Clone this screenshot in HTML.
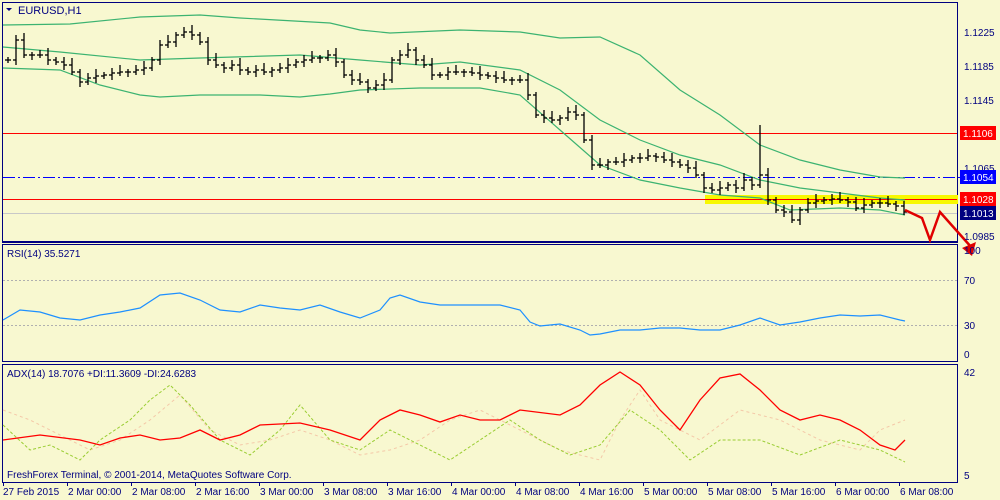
<!DOCTYPE html>
<html><head><meta charset="utf-8"><style>
html,body{margin:0;padding:0;background:#f8f8d0;}
svg{display:block;font-family:"Liberation Sans",sans-serif;}
</style></head><body>
<svg id="s" width="1000" height="500" xmlns="http://www.w3.org/2000/svg">
<rect width="1000" height="500" fill="#f8f8d0"/>
<rect x="2.5" y="2.5" width="955" height="239" fill="none" stroke="#000080"/>
<rect x="2.5" y="244.5" width="955" height="117" fill="none" stroke="#000080"/>
<rect x="2.5" y="364.5" width="955" height="118" fill="none" stroke="#000080"/>
<rect x="2" y="242" width="956" height="1" fill="#000080"/>
<polygon points="6,8 12,8 9,11" fill="#000080"/>
<text x="18" y="14" font-size="11" fill="#000080">EURUSD,H1</text>
<rect x="3" y="133" width="954" height="1" fill="#ff0000"/>
<g fill="#0000ff" id="dash"></g>
<rect x="705" y="195" width="253" height="9" fill="#f8f800"/>
<rect x="3" y="199" width="954" height="1" fill="#ff0000"/>
<rect x="3" y="213" width="954" height="1" fill="#c8c8c8"/>
<g fill="none" style="stroke:#3cb371;stroke-width:1.2">
<polyline points="3,25 70,24 140,17 200,15 240,18 330,23 360,30 390,33 460,30 520,32 560,38 600,37 640,55 680,90 720,115 760,145 800,160 840,170 880,177 905,178"/>
<polyline points="3,47 60,52 140,60 200,58 300,55 360,60 420,65 460,62 520,70 560,90 600,120 640,140 680,155 720,165 760,180 800,188 840,193 880,198 905,200"/>
<polyline points="3,68 60,70 100,85 140,95 160,97 200,95 260,95 300,97 330,94 360,90 420,88 480,88 520,95 560,130 600,165 640,180 680,188 720,195 760,198 790,210 840,208 880,210 905,215"/>
</g>
<g id="bars" style="stroke:#000;stroke-width:1.3"></g>
<path d="M905,210 L922,218 L930,240 L940,212 L972,248" fill="none" style="stroke:#e00000;stroke-width:2.5"/>
<polygon points="972,256 976,242 962,248" fill="#e00000"/>
<g font-size="10" fill="#000080">
<text x="964" y="36">1.1225</text>
<text x="964" y="70">1.1185</text>
<text x="964" y="104">1.1145</text>
<text x="964" y="172">1.1065</text>
<text x="964" y="240">1.0985</text>
</g>
<rect x="960" y="126" width="36" height="14" fill="#ff0000"/><text x="963" y="137" font-size="10" fill="#fff">1.1106</text>
<rect x="960" y="170" width="36" height="14" fill="#0000ff"/><text x="963" y="181" font-size="10" fill="#fff">1.1054</text>
<rect x="960" y="192" width="36" height="14" fill="#ff0000"/><text x="963" y="203" font-size="10" fill="#fff">1.1028</text>
<rect x="960" y="206" width="36" height="14" fill="#000080"/><text x="963" y="217" font-size="10" fill="#fff">1.1013</text>
<text x="7" y="257" font-size="10" fill="#000080">RSI(14) 35.5271</text>
<line x1="3" y1="280.5" x2="957" y2="280.5" style="stroke:#b0b0b0;stroke-dasharray:2,2"/>
<line x1="3" y1="325.5" x2="957" y2="325.5" style="stroke:#b0b0b0;stroke-dasharray:2,2"/>
<polyline fill="none" style="stroke:#1e90ff;stroke-width:1.2" points="3,320 20,310 40,312 60,318 80,320 100,315 120,312 140,308 160,295 180,293 200,300 220,310 240,312 260,305 280,308 300,310 320,305 340,312 360,318 380,310 390,298 400,295 420,302 440,305 460,305 480,305 500,305 520,310 530,322 540,326 560,324 580,330 590,335 600,334 620,330 640,330 660,328 680,328 700,330 720,330 740,325 760,318 780,325 800,322 820,318 840,315 860,316 880,315 900,320 905,321"/>
<g font-size="10" fill="#000080">
<text x="964" y="254">100</text><text x="964" y="284">70</text><text x="964" y="329">30</text><text x="964" y="358">0</text>
<text x="964" y="376">42</text><text x="964" y="479">5</text>
</g>
<text x="7" y="377" font-size="10" fill="#000080">ADX(14) 18.7076 +DI:11.3609 -DI:24.6283</text>
<polyline fill="none" style="stroke:#f4c8a8;stroke-dasharray:3,3" points="3,410 30,420 60,435 90,450 120,440 150,420 180,395 210,430 240,445 270,440 300,430 330,440 360,455 390,450 420,440 450,420 480,410 520,430 560,450 600,460 620,420 640,390 660,420 700,440 740,410 780,420 820,440 860,450 880,430 905,420"/>
<polyline fill="none" style="stroke:#9acd32;stroke-dasharray:3,2" points="3,425 30,450 50,445 80,460 100,440 130,420 150,400 170,385 190,405 220,440 250,455 280,430 300,405 330,440 360,450 390,430 420,445 450,460 480,440 510,420 540,440 570,455 600,445 630,410 660,430 690,460 720,440 760,440 800,455 840,440 860,445 880,450 905,462"/>
<polyline fill="none" style="stroke:#ff0000;stroke-width:1.3" points="3,440 40,435 80,440 100,445 120,438 140,435 160,440 180,438 200,430 220,440 240,435 260,425 300,423 330,430 360,440 380,420 400,410 420,415 440,422 460,415 480,420 500,420 520,410 560,415 580,405 600,385 620,372 640,385 660,410 680,430 700,400 720,378 740,374 760,390 780,410 800,420 820,415 840,420 860,430 880,445 895,450 905,440"/>
<text x="7" y="478" font-size="10" fill="#000080">FreshForex Terminal, © 2001-2014, MetaQuotes Software Corp.</text>
<g id="ticks" fill="#000080"></g>
<g id="times" font-size="10" fill="#000080"></g>
</svg>
<script>
var ys=[60,40,55,55,55,60,62,65,72,82,78,76,75,73,72,72,70,68,60,45,42,35,32,35,42,60,65,68,65,70,72,70,72,70,68,65,62,60,58,58,55,62,75,80,82,88,85,80,60,55,50,60,65,75,75,72,72,72,73,75,76,78,80,80,80,95,115,118,120,118,112,115,140,165,165,162,162,160,158,158,156,157,160,162,165,168,175,188,190,188,185,188,180,185,175,200,210,212,220,210,203,201,200,199,200,202,208,205,203,203,204,206,212];
var g=document.getElementById('bars'),h='',prev=ys[0];
for(var i=0;i<ys.length;i++){var x=8+i*8,c=ys[i],o=prev,hi=Math.min(o,c)-3-(i%3)*2,lo=Math.max(o,c)+3+(i%2)*2;
if(i==94){hi=125;}
h+='<line x1="'+x+'" y1="'+hi+'" x2="'+x+'" y2="'+lo+'"/><line x1="'+(x-3)+'" y1="'+o+'" x2="'+x+'" y2="'+o+'"/><line x1="'+x+'" y1="'+c+'" x2="'+(x+3)+'" y2="'+c+'"/>';prev=c;}
g.innerHTML=h;
var d='';for(var x=3;x<957;x+=20){d+='<rect x="'+x+'" y="177" width="12" height="1"/><rect x="'+(x+15)+'" y="177" width="2" height="1"/>';}
document.getElementById('dash').innerHTML=d;
var t=['27 Feb 2015','2 Mar 00:00','2 Mar 08:00','2 Mar 16:00','3 Mar 00:00','3 Mar 08:00','3 Mar 16:00','4 Mar 00:00','4 Mar 08:00','4 Mar 16:00','5 Mar 00:00','5 Mar 08:00','5 Mar 16:00','6 Mar 00:00','6 Mar 08:00'];
var th='',tk='';for(var j=0;j<t.length;j++){var x=3+j*64;th+='<text x="'+(x+(j?1:0))+'" y="495">'+t[j]+'</text>';tk+='<rect x="'+x+'" y="482" width="1" height="4"/>';}
document.getElementById('times').innerHTML=th;document.getElementById('ticks').innerHTML=tk;
</script>
</body></html>
